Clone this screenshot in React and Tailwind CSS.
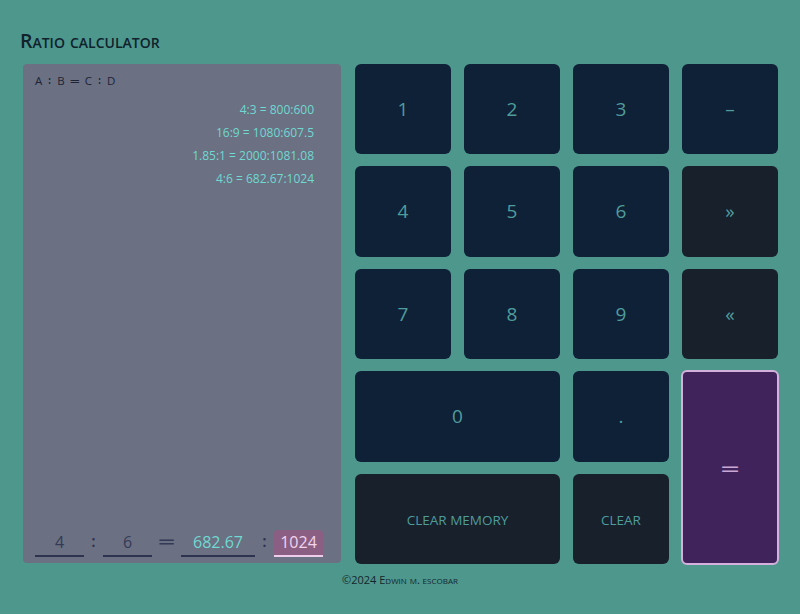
import React from 'react';

const font = { fontFamily: '"Open Sans", "Noto Sans", sans-serif' };

const history = ['4:3 = 800:600', '16:9 = 1080:607.5', '1.85:1 = 2000:1081.08', '4:6 = 682.67:1024'];

const Key = ({ label, className = '', dark = false }) => (
    <button
        className={`rounded-md flex items-center justify-center text-[#4f9c9c] ${dark ? 'bg-[#18202b]' : 'bg-[#0f2137]'} ${className}`}
    >
        {label}
    </button>
);

const App = () => {
    return (
        <div className="w-[800px] h-[614px] bg-[#4e978c] pt-[27px] pl-[20px]" style={font}>
            <h1 className="text-[19.5px] leading-[28px] font-semibold text-[#10222c] [font-variant:small-caps]">Ratio calculator</h1>

            <div className="flex mt-[9px] gap-[14px] pl-[3px]">
                <div className="w-[318px] h-[499px] bg-[#6b7082] rounded-sm flex flex-col px-[12px] pt-[8px] pb-[6px]">
                    <div className="text-[11.5px] leading-[18px] font-medium text-[#1e2436] tracking-[1.5px]">A ∶ B ═ C ∶ D</div>
                    <div className="flex flex-col items-end pr-[15px] mt-[11px] gap-[5.5px] text-[12px] text-[#6fd9d2]">
                        {history.map((h) => (
                            <div key={h} className="leading-[17.5px]">{h}</div>
                        ))}
                    </div>
                    <div className="mt-auto flex items-end text-[16px] h-[30px]">
                        <div className="w-[49px] text-center text-[#343a55] border-b-2 border-[#2e3350] leading-[24px] pb-[1px]">4</div>
                        <div className="w-[19px] text-center text-[#2e3350] font-semibold leading-[24px] pb-[4px]">:</div>
                        <div className="w-[49px] text-center text-[#343a55] border-b-2 border-[#2e3350] leading-[24px] pb-[1px]">6</div>
                        <div className="w-[29px] text-center text-[#343a55] text-[20px] leading-[24px] pb-[4px]">═</div>
                        <div className="w-[74px] text-center text-[#6fd9d2] border-b-2 border-[#2e3350] leading-[24px] pb-[1px]">682.67</div>
                        <div className="w-[19px] text-center text-[#2e3350] font-semibold leading-[24px] pb-[4px]">:</div>
                        <div className="w-[49px] text-center text-[#f2d4ee] bg-[#8a5f83] rounded-t-sm border-b-2 border-[#eccdea] leading-[24px] pb-[1px]">1024</div>
                    </div>
                </div>

                <div className="grid grid-cols-[repeat(4,96px)] grid-rows-5 gap-x-[13px] gap-y-[12px] h-[500px] text-[19px]">
                    <Key label="1" />
                    <Key label="2" />
                    <Key label="3" />
                    <Key label="–" />
                    <Key label="4" />
                    <Key label="5" />
                    <Key label="6" />
                    <Key label="»" dark />
                    <Key label="7" />
                    <Key label="8" />
                    <Key label="9" />
                    <Key label="«" dark />
                    <Key label="0" className="col-span-2" />
                    <Key label="." />
                    <button className="row-span-2 -m-px rounded-md bg-[#40235a] border-2 border-[#d4b0dc] text-[#c9a8d6] text-[22px] flex items-center justify-center">═</button>
                    <Key label="CLEAR MEMORY" dark className="col-span-2 text-[13.5px] pt-[2px]" />
                    <Key label="CLEAR" dark className="text-[13.5px] pt-[2px]" />
                </div>
            </div>

            <div className="text-center text-[11px] text-[#13262c] mt-[8px] pr-[20px] [font-variant:small-caps]">©2024 Edwin m. escobar</div>
        </div>
    );
};

export default App;
